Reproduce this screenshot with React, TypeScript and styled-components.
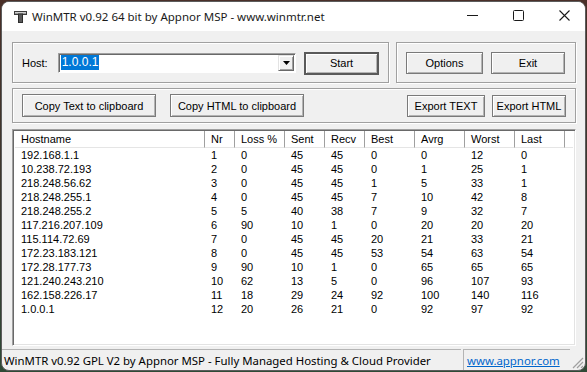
import styled, { createGlobalStyle } from "styled-components";

const GlobalStyle = createGlobalStyle`
  * { box-sizing: border-box; }
  html, body {
    margin: 0;
    padding: 0;
    background: linear-gradient(180deg, #4a2f28 0%, #3a3a30 60%, #2f4a36 100%);
  }
  body { width: 587px; height: 372px; overflow: hidden; }
`;

type Hop = {
  host: string;
  nr: number;
  loss: number;
  sent: number;
  recv: number;
  best: number;
  avrg: number;
  worst: number;
  last: number;
};

const hops: Hop[] = [
  { host: "192.168.1.1", nr: 1, loss: 0, sent: 45, recv: 45, best: 0, avrg: 0, worst: 12, last: 0 },
  { host: "10.238.72.193", nr: 2, loss: 0, sent: 45, recv: 45, best: 0, avrg: 1, worst: 25, last: 1 },
  { host: "218.248.56.62", nr: 3, loss: 0, sent: 45, recv: 45, best: 1, avrg: 5, worst: 33, last: 1 },
  { host: "218.248.255.1", nr: 4, loss: 0, sent: 45, recv: 45, best: 7, avrg: 10, worst: 42, last: 8 },
  { host: "218.248.255.2", nr: 5, loss: 5, sent: 40, recv: 38, best: 7, avrg: 9, worst: 32, last: 7 },
  { host: "117.216.207.109", nr: 6, loss: 90, sent: 10, recv: 1, best: 0, avrg: 20, worst: 20, last: 20 },
  { host: "115.114.72.69", nr: 7, loss: 0, sent: 45, recv: 45, best: 20, avrg: 21, worst: 33, last: 21 },
  { host: "172.23.183.121", nr: 8, loss: 0, sent: 45, recv: 45, best: 53, avrg: 54, worst: 63, last: 54 },
  { host: "172.28.177.73", nr: 9, loss: 90, sent: 10, recv: 1, best: 0, avrg: 65, worst: 65, last: 65 },
  { host: "121.240.243.210", nr: 10, loss: 62, sent: 13, recv: 5, best: 0, avrg: 96, worst: 107, last: 93 },
  { host: "162.158.226.17", nr: 11, loss: 18, sent: 29, recv: 24, best: 92, avrg: 100, worst: 140, last: 116 },
  { host: "1.0.0.1", nr: 12, loss: 20, sent: 26, recv: 21, best: 0, avrg: 92, worst: 97, last: 92 },
];

const columns = ["Hostname", "Nr", "Loss %", "Sent", "Recv", "Best", "Avrg", "Worst", "Last", ""];
const gridCols = "190px 30px 50px 40px 40px 50px 50px 50px 50px 1fr";

export default function App() {
  return (
    <>
      <GlobalStyle />
      <Window>
        <TitleBar>
          <AppIcon width="13" height="13" viewBox="0 0 13 13">
            <rect x="0.5" y="1.5" width="12" height="3" fill="#9a9a9a" stroke="#3c3c3c" />
            <rect x="4.5" y="4" width="4" height="8.5" fill="#5a5a5a" stroke="#2e2e2e" />
            <rect x="1" y="2" width="11" height="1" fill="#d0d0d0" />
          </AppIcon>
          <Title>WinMTR v0.92 64 bit by Appnor MSP - www.winmtr.net</Title>
          <Caption>
            <CaptionButton>
              <svg width="11" height="11" viewBox="0 0 11 11">
                <line x1="0" y1="5.5" x2="11" y2="5.5" stroke="#1a1a1a" strokeWidth="1" />
              </svg>
            </CaptionButton>
            <CaptionButton>
              <svg width="11" height="11" viewBox="0 0 11 11">
                <rect x="0.5" y="0.5" width="10" height="10" rx="1" fill="none" stroke="#1a1a1a" />
              </svg>
            </CaptionButton>
            <CaptionButton>
              <svg width="11" height="11" viewBox="0 0 11 11">
                <path d="M0.5 0.5 L10.5 10.5 M10.5 0.5 L0.5 10.5" stroke="#1a1a1a" strokeWidth="1.1" />
              </svg>
            </CaptionButton>
          </Caption>
        </TitleBar>

        <Body>
          <TopRow>
            <Group $width={377}>
              <HostLabel>Host:</HostLabel>
              <Combo>
                <Selected>1.0.0.1</Selected>
                <DropButton>
                  <svg width="7" height="4" viewBox="0 0 7 4">
                    <path d="M0 0 H7 L3.5 4 Z" fill="#000" />
                  </svg>
                </DropButton>
              </Combo>
              <Button $width={75} $height={23} $default>Start</Button>
            </Group>
            <Group $width={180}>
              <Button $width={77} $height={22}>Options</Button>
              <Button $width={74} $height={22}>Exit</Button>
            </Group>
          </TopRow>

          <ActionRow>
            <Button $width={134} $height={23}>Copy Text to clipboard</Button>
            <Button $width={134} $height={23}>Copy HTML to clipboard</Button>
            <Spacer />
            <Button $width={78} $height={22}>Export TEXT</Button>
            <Button $width={74} $height={22}>Export HTML</Button>
          </ActionRow>

          <ListView>
            <HeaderRow>
              {columns.map((c, i) => (
                <HeaderCell key={i}>{c}</HeaderCell>
              ))}
            </HeaderRow>
            {hops.map((h) => (
              <Row key={h.nr}>
                <Cell>{h.host}</Cell>
                <Cell>{h.nr}</Cell>
                <Cell>{h.loss}</Cell>
                <Cell>{h.sent}</Cell>
                <Cell>{h.recv}</Cell>
                <Cell>{h.best}</Cell>
                <Cell>{h.avrg}</Cell>
                <Cell>{h.worst}</Cell>
                <Cell>{h.last}</Cell>
                <Cell />
              </Row>
            ))}
          </ListView>
        </Body>

        <StatusBar>
          <StatusPanel $grow>WinMTR v0.92 GPL V2 by Appnor MSP - Fully Managed Hosting &amp; Cloud Provider</StatusPanel>
          <StatusPanel>
            <Link>www.appnor.com</Link>
          </StatusPanel>
          <Grip width="14" height="14" viewBox="0 0 14 14">
            <path d="M13 3 L3 13 M13 7 L7 13 M13 11 L11 13" stroke="#a0a0a0" strokeWidth="1.2" />
          </Grip>
        </StatusBar>
      </Window>
    </>
  );
}

const Window = styled.div`
  margin: 1px 0 0 1px;
  width: 585px;
  height: 370px;
  border: 1px solid #5c5c5c;
  border-radius: 8px;
  overflow: hidden;
  background: #f0f0f0;
  display: flex;
  flex-direction: column;
  font-family: "Liberation Sans", Arial, sans-serif;
  font-size: 11px;
  color: #000;
`;

const TitleBar = styled.div`
  height: 29px;
  flex: none;
  background: #fff;
  display: flex;
  align-items: center;
  padding-left: 12px;
`;

const AppIcon = styled.svg`
  flex: none;
  margin-top: -1px;
`;

const Title = styled.div`
  margin-left: 5px;
  font-family: "Noto Sans", "Open Sans", sans-serif;
  font-size: 11.5px;
  color: #1a1a1a;
  margin-top: -1px;
`;

const Caption = styled.div`
  margin-left: auto;
  display: flex;
  align-self: stretch;
  margin-right: -2px;
`;

const CaptionButton = styled.div`
  width: 46px;
  display: flex;
  align-items: center;
  justify-content: center;
  padding-bottom: 2px;
`;

const Body = styled.div`
  flex: 1;
  display: flex;
  flex-direction: column;
  padding: 11px 9px 0 10px;
`;

const etched = `
  border: 1px solid #a0a0a0;
  box-shadow: inset 1px 1px 0 #fff, 1px 1px 0 #fff;
`;

const TopRow = styled.div`
  display: flex;
  justify-content: space-between;
`;

const Group = styled.div<{ $width: number }>`
  ${etched}
  width: ${(p) => p.$width}px;
  height: 41px;
  display: flex;
  align-items: center;
  gap: 8px;
  padding: 1px 9px 0 9px;
`;

const HostLabel = styled.span`
  margin-right: 2px;
`;

const Combo = styled.div`
  width: 245px;
  height: 20px;
  background: #fff;
  border: 1px solid #a0a0a0;
  box-shadow: inset 1px 1px 0 #696969;
  border-right-color: #fff;
  border-bottom-color: #fff;
  display: flex;
  align-items: center;
  padding: 1px 1px 1px 2px;
  margin-top: -1px;
`;

const Selected = styled.span`
  background: #0078d7;
  color: #fff;
  height: 15px;
  line-height: 15px;
  padding: 0 1px;
  font-size: 12px;
`;

const DropButton = styled.div`
  margin-left: auto;
  width: 16px;
  height: 16px;
  background: #f0f0f0;
  border: 1px solid #696969;
  border-top-color: #e3e3e3;
  border-left-color: #e3e3e3;
  box-shadow: inset 1px 1px 0 #fff, inset -1px -1px 0 #a0a0a0;
  display: flex;
  align-items: center;
  justify-content: center;
`;

const Button = styled.button<{ $width: number; $height: number; $default?: boolean }>`
  width: ${(p) => p.$width}px;
  height: ${(p) => p.$height}px;
  flex: none;
  padding: 0;
  font-family: "Liberation Sans", Arial, sans-serif;
  font-size: 11px;
  color: #000;
  background: #f0f0f0;
  border: ${(p) => (p.$default ? "2px solid #5a5a5a" : "1px solid #7a7a7a")};
  box-shadow: inset 1px 1px 0 #fff, inset -1px -1px 0 #b4b4b4;
  display: flex;
  align-items: center;
  justify-content: center;
`;

const ActionRow = styled.div`
  ${etched}
  margin-top: 5px;
  height: 35px;
  display: flex;
  align-items: center;
  gap: 14px;
  padding: 0 9px 0 9px;
  & > button:last-child {
    margin-left: -7px;
  }
`;

const Spacer = styled.div`
  flex: 1;
`;

const ListView = styled.div`
  margin-top: 6px;
  height: 217px;
  background: #fff;
  border: 1px solid #a0a0a0;
  border-right-color: #fff;
  border-bottom-color: #fff;
  box-shadow: inset 1px 1px 0 #696969, inset -1px -1px 0 #e3e3e3;
  padding: 1px 2px 0 2px;
  overflow: hidden;
`;

const HeaderRow = styled.div`
  display: grid;
  grid-template-columns: ${gridCols};
  height: 17px;
`;

const HeaderCell = styled.div`
  padding-left: 6px;
  line-height: 17px;
  border-right: 1px solid #a0a0a0;
  border-bottom: 1px solid #e5e5e5;
  white-space: nowrap;
  overflow: hidden;
  &:last-child {
    border-right: none;
  }
`;

const Row = styled.div`
  display: grid;
  grid-template-columns: ${gridCols};
  height: 14px;
  line-height: 14px;
`;

const Cell = styled.div`
  padding-left: 6px;
  white-space: nowrap;
  overflow: hidden;
`;

const StatusBar = styled.div`
  margin-top: 3px;
  height: 21px;
  flex: none;
  display: flex;
  align-items: stretch;
  font-family: "Noto Sans", "Open Sans", sans-serif;
  font-size: 11.4px;
`;

const StatusPanel = styled.div<{ $grow?: boolean }>`
  ${(p) => (p.$grow ? "width: 459px;" : "width: 107px; margin-left: 2px;")}
  border-top: 1px solid #b4b4b4;
  border-left: ${(p) => (p.$grow ? "none" : "1px solid #b4b4b4")};
  padding-left: ${(p) => (p.$grow ? "2px" : "3px")};
  display: flex;
  align-items: center;
  white-space: nowrap;
  overflow: hidden;
  color: #000;
`;

const Link = styled.span`
  color: #0066cc;
  text-decoration: underline;
`;

const Grip = styled.svg`
  margin-left: auto;
  align-self: flex-end;
  margin-right: 1px;
  margin-bottom: 1px;
`;
